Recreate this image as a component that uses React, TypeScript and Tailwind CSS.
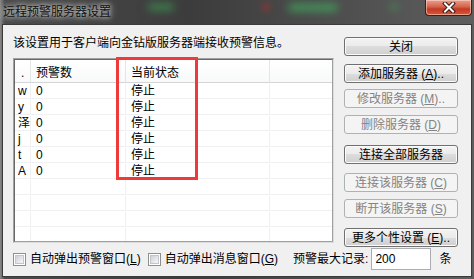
import React from 'react';

const rows = ['w', 'y', '泽', 'j', 't', 'A'];

const Btn: React.FC<{ children: React.ReactNode; disabled?: boolean; className?: string }> = ({ children, disabled, className = '' }) => (
  <div
    className={
      'h-[19px] w-[114px] rounded-[3px] border flex items-center justify-center text-[12px] leading-[14px] whitespace-nowrap ' +
      (disabled
        ? 'border-[#adb2b5] bg-[#f4f4f4] text-[#838383] '
        : 'border-[#707070] bg-[linear-gradient(to_bottom,#f3f3f3_0%,#ebebeb_50%,#dddddd_50%,#cfcfcf_100%)] shadow-[inset_0_0_0_1px_#fbfbfb] text-black ') +
      className
    }
  >
    {children}
  </div>
);

const Check: React.FC = () => (
  <span className="w-[13px] h-[13px] border border-[#8e8f8f] bg-white p-[1px] flex">
    <span className="flex-1 border border-[#c2c6cc] bg-[linear-gradient(135deg,#cdd0d5_0%,#e4e6e9_55%,#f7f7f7_100%)]" />
  </span>
);

export default function App() {
  return (
    <div className="w-[474px] h-[279px] flex flex-col bg-[linear-gradient(to_right,#8a8a8a_0%,#4a4a4a_1%,#3c3c3c_40%,#5e5e5e_100%)] font-['Liberation_Sans','Noto_Sans_CJK_SC',sans-serif] text-black overflow-hidden">
      {/* title bar */}
      <div className="relative h-[24px] flex items-start shrink-0">
        <span className="absolute left-[148px] top-[4px] w-[26px] h-[6px] rounded-full bg-[#3fae5a] blur-[4px] opacity-70" />
        <span className="absolute left-[262px] top-[3px] w-[8px] h-[8px] rounded-full bg-[#b03030] blur-[3px] opacity-60" />
        <span className="absolute left-[288px] top-[4px] w-[50px] h-[7px] rounded-full bg-[#3fbf62] blur-[4px] opacity-70" />
        <span className="absolute left-[390px] top-[3px] w-[8px] h-[8px] rounded-full bg-[#3fae5a] blur-[4px] opacity-50" />
        <span className="relative pl-[3px] pt-[4px] text-[12px] leading-[14px] text-[#111] font-['Noto_Sans_CJK_SC',sans-serif] [text-shadow:0_0_5px_rgba(255,255,255,0.95),0_0_10px_rgba(255,255,255,0.6)]">
          远程预警服务器设置
        </span>
        <div className="relative ml-auto mr-[2px] w-[47px] h-[16px] rounded-b-[4px] border border-t-0 border-[#4a1a12] bg-[linear-gradient(to_bottom,#e9a090_0%,#d6624c_45%,#c23a22_60%,#d8573c_100%)] shadow-[inset_0_0_0_1px_rgba(255,220,210,0.55)] flex items-center justify-center">
          <svg width="14" height="11" viewBox="0 0 14 11">
            <path d="M3 1.5 L11 9.5 M11 1.5 L3 9.5" stroke="#3a1a14" strokeWidth="4" strokeLinecap="square" />
            <path d="M3 1.5 L11 9.5 M11 1.5 L3 9.5" stroke="#ffffff" strokeWidth="2" strokeLinecap="square" />
          </svg>
        </div>
      </div>

      {/* client area */}
      <div className="mx-[2px] mb-[2px] flex-1 border border-[#3a3a3a] bg-[#f0f0f0] pl-[10px] pt-[10px] flex flex-col text-[12px]">
        <div className="flex h-[212px]">
          <div className="flex flex-col w-[321px]">
            <div className="h-[16px] leading-[16px] whitespace-nowrap">该设置用于客户端向金钻版服务器端接收预警信息。</div>
            <div className="relative mt-[7px]">
              <div className="h-[185px] border border-t-[#a0a0a0] border-l-[#a0a0a0] border-r-[#dcdcdc] border-b-[#dcdcdc] overflow-hidden">
                <div className="h-full border border-t-[#696969] border-l-[#696969] border-r-[#a0a0a0] border-b-[#a0a0a0] bg-white overflow-hidden">
                  <div className="flex h-[23px] border-b border-[#d5d5d5] bg-[linear-gradient(to_bottom,#ffffff,#f8f9fa)]">
                    <div className="w-[16px] border-r border-[#e3e5e7] pl-[6px] pt-[6px] leading-[14px]">.</div>
                    <div className="w-[95px] border-r border-[#e3e5e7] pl-[5px] pt-[6px] leading-[14px]">预警数</div>
                    <div className="w-[144px] border-r border-[#e3e5e7] pl-[5px] pt-[6px] leading-[14px]">当前状态</div>
                    <div className="flex-1" />
                  </div>
                  {Array.from({ length: 10 }).map((_, i) => (
                    <div key={i} className="flex h-[16px] border-b border-[#f0f0f0] pt-[1px] leading-[15px]">
                      <div className="w-[16px] border-r border-[#f0f0f0] pl-[3px] overflow-hidden whitespace-nowrap">{rows[i] ?? ''}</div>
                      <div className="w-[95px] border-r border-[#f0f0f0] pl-[5px]">{i < rows.length ? '0' : ''}</div>
                      <div className="w-[144px] border-r border-[#f0f0f0] pl-[5px]">{i < rows.length ? '停止' : ''}</div>
                      <div className="flex-1" />
                    </div>
                  ))}
                </div>
              </div>
              <div className="absolute left-[103px] top-[-1px] w-[82px] h-[123px] border-[3px] border-[#ef3a3a]" />
            </div>
          </div>

          <div className="ml-[10px] mt-[2px] flex flex-col">
            <Btn>关闭</Btn>
            <Btn className="mt-[8px]">添加服务器 (<u>A</u>)..</Btn>
            <Btn disabled className="mt-[6px]">修改服务器 (<u>M</u>)..</Btn>
            <Btn disabled className="mt-[7px]">删除服务器 (<u>D</u>)</Btn>
            <Btn className="mt-[11px]">连接全部服务器</Btn>
            <Btn disabled className="mt-[9px]">连接该服务器 (<u>C</u>)</Btn>
            <Btn disabled className="mt-[7px]">断开该服务器 (<u>S</u>)</Btn>
            <Btn className="mt-[10px]">更多个性设置 (<u>E</u>)..</Btn>
          </div>
        </div>

        <div className="mt-[1px] h-[22px] flex items-center whitespace-nowrap">
          <Check />
          <span className="ml-[4px]">自动弹出预警窗口(<u>L</u>)</span>
          <span className="ml-[7px]"><Check /></span>
          <span className="ml-[4px]">自动弹出消息窗口(<u>G</u>)</span>
          <span className="ml-[15px]">预警最大记录:</span>
          <div className="ml-[3px] w-[60px] h-[22px] border border-[#abadb3] bg-white pl-[3px] leading-[20px]">200</div>
          <span className="ml-[8px]">条</span>
        </div>
      </div>
    </div>
  );
}
